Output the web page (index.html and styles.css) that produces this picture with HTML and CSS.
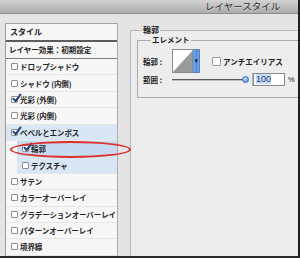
FILE: index.html
```html
<!DOCTYPE html>
<html lang="ja">
<head>
<meta charset="utf-8">
<link rel="stylesheet" href="styles.css">
</head>
<body>
<div class="window">
  <div class="titlebar"><span class="title">レイヤースタイル</span></div>
  <div class="main">
    <div class="styles">
      <div class="hdr">スタイル</div>
      <div class="preset">レイヤー効果：初期設定</div>
      <ul class="list">
        <li class="row"><span class="cb"></span>ドロップシャドウ</li>
        <li class="row"><span class="cb"></span>シャドウ (内側)</li>
        <li class="row"><span class="cb on"><svg viewBox="0 0 10 10"><path d="M1.5 5.2 L4 8 L9.5 0.5" /></svg></span>光彩 (外側)</li>
        <li class="row"><span class="cb"></span>光彩 (内側)</li>
        <li class="row sel"><span class="cb on"><svg viewBox="0 0 10 10"><path d="M1.5 5.2 L4 8 L9.5 0.5" /></svg></span>ベベルとエンボス</li>
        <li class="row sub cur"><span class="cb on"><svg viewBox="0 0 10 10"><path d="M1.5 5.2 L4 8 L9.5 0.5" /></svg></span><b>輪郭</b></li>
        <li class="row sub sel"><span class="cb"></span>テクスチャ</li>
        <li class="row"><span class="cb"></span>サテン</li>
        <li class="row"><span class="cb"></span>カラーオーバーレイ</li>
        <li class="row"><span class="cb"></span>グラデーションオーバーレイ</li>
        <li class="row"><span class="cb"></span>パターンオーバーレイ</li>
        <li class="row"><span class="cb"></span>境界線</li>
      </ul>
    </div>
    <fieldset class="outer">
      <legend>輪郭</legend>
      <fieldset class="inner">
        <legend>エレメント</legend>
        <div class="frow">
          <span class="flabel">輪郭 :</span>
          <span class="swatch">
            <svg width="28" height="24" viewBox="0 0 28 24">
              <defs>
                <linearGradient id="btn" x1="0" y1="0" x2="1" y2="0">
                  <stop offset="0" stop-color="#8fbdf0"/>
                  <stop offset="0.5" stop-color="#4b8be0"/>
                  <stop offset="1" stop-color="#7fb1ec"/>
                </linearGradient>
              </defs>
              <rect x="0.5" y="0.5" width="27" height="23" fill="#fff" stroke="#8a8a8a"/>
              <polygon points="1,23 21,1 21,23" fill="#9a9a9a"/>
              <rect x="21" y="0.5" width="6.5" height="23" fill="url(#btn)" stroke="#5a7fb5" rx="1.5"/>
              <polygon points="22.3,10.5 26.2,10.5 24.25,14" fill="#1b2a4a"/>
            </svg>
          </span>
          <span class="cb big"></span>
          <span class="aa">アンチエイリアス</span>
        </div>
        <div class="frow r2">
          <span class="flabel">範囲 :</span>
          <span class="slider"><span class="track"></span><span class="thumb"></span></span>
          <span class="num"><span class="numsel">100</span></span>
          <span class="pct">%</span>
        </div>
      </fieldset>
    </fieldset>
  </div>
  <div class="ring"></div>
</div>
</body>
</html>
```
FILE: styles.css
```css
* { box-sizing: border-box; }
html, body { margin: 0; padding: 0; }
body {
  width: 300px;
  height: 258px;
  overflow: hidden;
  font-family: "Noto Sans CJK JP", "Noto Sans", sans-serif;
  background: #e4e4e4;
  color: #222;
}
.window {
  position: relative;
  height: 258px;
  display: flex;
  flex-direction: column;
  border-right: 2px solid #1e1e1e;
  border-bottom: 2px solid #2a2a2a;
  overflow: hidden;
}
.titlebar {
  height: 14px;
  flex: none;
  background: linear-gradient(#d2d2d2, #acacac);
  border-bottom: 1px solid #8c8c8c;
  padding-left: 205px;
  font-size: 9.5px;
  line-height: 13px;
  color: #2b2b2b;
  text-shadow: 0 1px 0 rgba(255,255,255,0.45);
  white-space: nowrap;
}
.main {
  flex: 1;
  min-height: 0;
  display: flex;
  gap: 12px;
  padding: 9px 0 0 5px;
}
.styles {
  width: 113px;
  flex: none;
  display: flex;
  flex-direction: column;
  border-left: 1px solid #9a9a9a;
  border-right: 1px solid #ababab;
  background: #f7f7f7;
}
.hdr {
  height: 19px;
  border-top: 1px solid #a4a4a4;
  border-bottom: 2px solid #5c5c5c;
  font-weight: 700;
  font-size: 8px;
  line-height: 16px;
  padding-left: 4px;
  background: #f6f6f6;
}
.preset {
  height: 17px;
  border-bottom: 1px solid #7c7c7c;
  font-weight: 700;
  font-size: 7.5px;
  line-height: 16px;
  padding-left: 3px;
  white-space: nowrap;
  background: #f6f6f6;
}
.list {
  margin: 0;
  padding: 0;
  list-style: none;
}
.row {
  height: 16.4px;
  display: flex;
  align-items: center;
  gap: 2px;
  padding-left: 5px;
  border-bottom: 1px solid #e8e8e8;
  font-size: 7.5px;
  font-weight: 700;
  white-space: nowrap;
  color: #262626;
  letter-spacing: -0.1px;
}
.row.sel { background: #d9e6f6; }
.row.sub { margin-left: 11px; }
.row.cur { background: #c6daf2; }
.row b { font-weight: 700; }
.cb {
  width: 7px;
  height: 7px;
  flex: none;
  border: 1px solid #8e8e8e;
  background: #fff;
  border-radius: 1px;
  position: relative;
}
.cb svg {
  position: absolute;
  left: 0;
  top: -3px;
  width: 9px;
  height: 9px;
  overflow: visible;
}
.cb svg path {
  fill: none;
  stroke: #1f3f86;
  stroke-width: 2.2;
  stroke-linecap: round;
  stroke-linejoin: round;
}
.outer {
  flex: 1;
  margin: 2px 0 0 0;
  padding: 0 0 0 6px;
  border: 1px solid #b6b6b6;
  border-right: none;
  border-bottom: none;
  background: #ededed;
  min-width: 0;
}
.outer > legend {
  margin-left: 5px;
  padding: 0 1px;
  font-size: 8px;
  font-weight: 700;
  line-height: 10px;
}
.inner {
  margin: 0;
  padding: 4px 0 11px 5px;
  border: 1px solid #ababab;
  border-right: none;
  min-width: 0;
}
.inner > legend {
  margin-left: 8px;
  padding: 0 1px;
  font-size: 7.5px;
  font-weight: 700;
  line-height: 10px;
}
.frow {
  display: flex;
  align-items: center;
  font-size: 7.5px;
  font-weight: 700;
  white-space: nowrap;
}
.flabel { width: 29px; flex: none; }
.swatch { display: block; width: 28px; height: 24px; flex: none; }
.swatch svg { display: block; }
.cb.big {
  width: 9px;
  height: 9px;
  margin-left: 12px;
  border-color: #9a9a9a;
}
.aa { margin-left: 2px; }
.r2 { margin-top: 0; height: 13px; }
.slider {
  position: relative;
  width: 77px;
  height: 8px;
  flex: none;
}
.track {
  position: absolute;
  left: 0;
  right: 4px;
  top: 3px;
  height: 2px;
  background: #5a5a5a;
  border-bottom: 1px solid #bdbdbd;
}
.thumb {
  position: absolute;
  right: 0;
  top: 0;
  width: 7px;
  height: 7px;
  border-radius: 50%;
  background: radial-gradient(circle at 40% 35%, #bfe0ff, #3d86d8);
  border: 1px solid #3a6fb3;
}
.num {
  margin-left: 4px;
  width: 32px;
  height: 13px;
  flex: none;
  background: #fff;
  border: 1px solid #8a8a8a;
  box-shadow: -1px 0 0 #8fbff0;
  font-family: "Liberation Sans", sans-serif;
  font-size: 9px;
  font-weight: 400;
  line-height: 11px;
  padding-left: 2px;
  color: #1c3a7e;
}
.numsel { background: #c7dcf6; }
.pct {
  margin-left: 3px;
  font-family: "Liberation Sans", sans-serif;
  font-size: 7.5px;
  font-weight: 400;
}
.ring {
  position: absolute;
  left: 10px;
  top: 141px;
  width: 121px;
  height: 17px;
  border: 2px solid #dd2f2a;
  border-radius: 50%;
}
```
